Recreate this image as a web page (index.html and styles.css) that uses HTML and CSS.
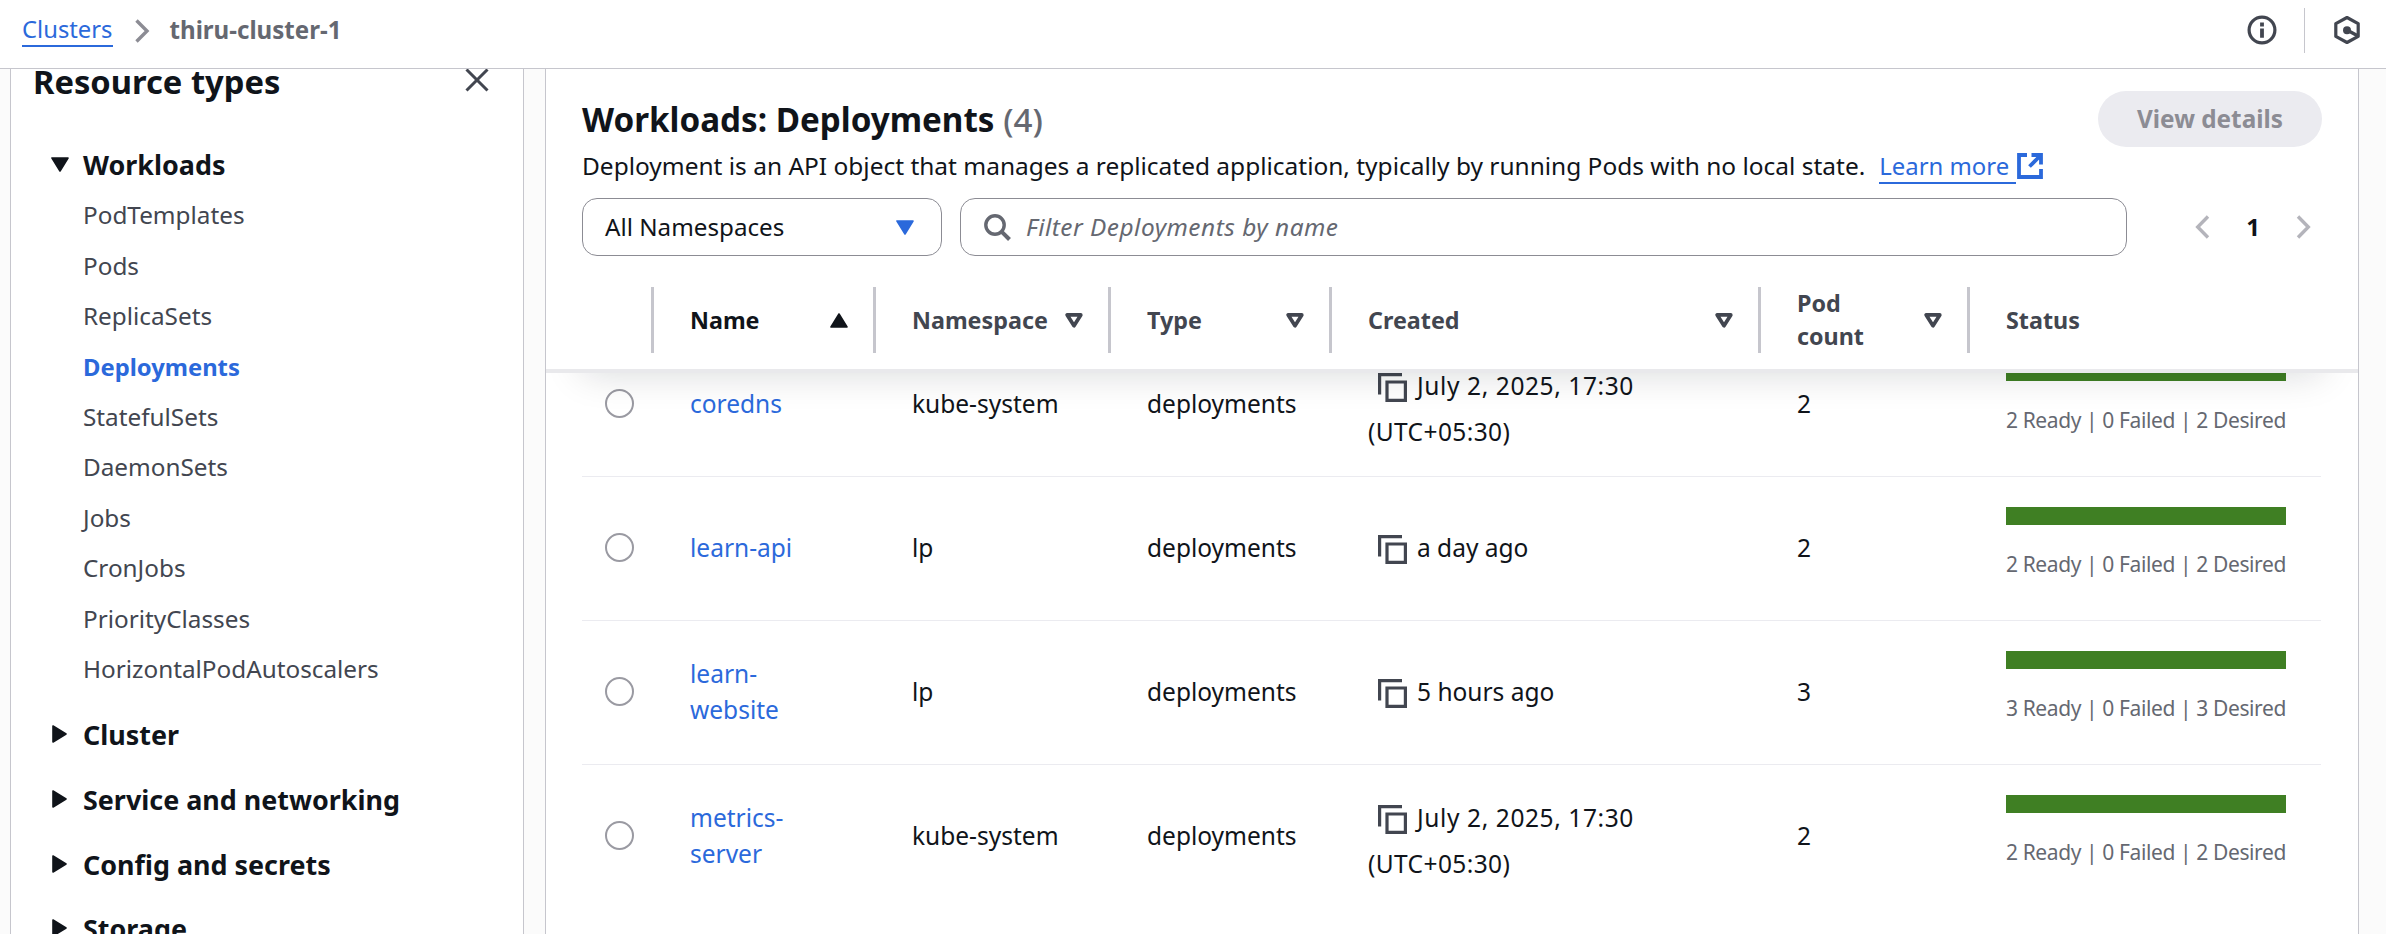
FILE: index.html
```
<!DOCTYPE html>
<html lang="en">
<head>
<meta charset="utf-8">
<title>thiru-cluster-1</title>
<link rel="stylesheet" href="styles.css">
</head>
<body>
<svg class="defs" width="0" height="0">
  <symbol id="copy" viewBox="0 0 29 29"><path d="M1.6 21.5V1.6H24M9 9h18.4v18.4H9z" fill="none" stroke="currentColor" stroke-width="3.2"/></symbol>
  <symbol id="sort" viewBox="0 0 18 15"><path d="M2.2 1.9h13.6L9 12.8z" fill="none" stroke="currentColor" stroke-width="3.7" stroke-linejoin="round"/></symbol>
  <symbol id="down" viewBox="0 0 18 15"><path d="M1 1h16L9 14z" fill="currentColor" stroke="currentColor" stroke-width="1.6" stroke-linejoin="round"/></symbol>
  <symbol id="up" viewBox="0 0 18 15"><path d="M1 14h16L9 1z" fill="currentColor" stroke="currentColor" stroke-width="1.6" stroke-linejoin="round"/></symbol>
  <symbol id="right" viewBox="0 0 15 18"><path d="M1 1v16l13-8z" fill="currentColor" stroke="currentColor" stroke-width="1.6" stroke-linejoin="round"/></symbol>
</svg>

<header class="topbar">
  <nav class="crumbs">
    <a class="crumb-link" href="#">Clusters</a>
    <svg class="crumb-sep" width="16" height="24" viewBox="0 0 16 24"><path d="M2.5 1.5 13 12 2.5 22.5" fill="none" stroke="currentColor" stroke-width="3.4"/></svg>
    <span class="crumb-current">thiru-cluster-1</span>
  </nav>
  <div class="tools">
    <svg width="30" height="30" viewBox="0 0 30 30"><circle cx="15" cy="15" r="12.9" fill="none" stroke="currentColor" stroke-width="3.2"/><path d="M15 7.5v4M15 13.4v9.3" stroke="currentColor" stroke-width="3.8"/></svg>
    <i class="tool-divider"></i>
    <svg width="26" height="30" viewBox="0 0 26 30"><path d="M13 2.5 24.2 8.6v12.8L13 27.5 1.8 21.4V8.6z" fill="none" stroke="currentColor" stroke-width="3.2" stroke-linejoin="round"/><circle cx="13" cy="15.2" r="4" fill="currentColor"/><path d="M13 15 24 21" stroke="currentColor" stroke-width="3.4"/></svg>
  </div>
</header>

<div class="layout">
  <aside class="sidebar">
    <div class="side-head">
      <h2 class="side-title">Resource types</h2>
      <svg width="24" height="24" viewBox="0 0 24 24"><path d="M1.5 1.5l21 21M22.5 1.5l-21 21" stroke="currentColor" stroke-width="3"/></svg>
    </div>
    <div class="group open"><svg class="caret" width="18" height="15"><use href="#down"/></svg>Workloads</div>
    <ul class="links">
      <li>PodTemplates</li>
      <li>Pods</li>
      <li>ReplicaSets</li>
      <li class="active">Deployments</li>
      <li>StatefulSets</li>
      <li>DaemonSets</li>
      <li>Jobs</li>
      <li>CronJobs</li>
      <li>PriorityClasses</li>
      <li>HorizontalPodAutoscalers</li>
    </ul>
    <div class="group"><svg class="caret side" width="15" height="18"><use href="#right"/></svg>Cluster</div>
    <div class="group"><svg class="caret side" width="15" height="18"><use href="#right"/></svg>Service and networking</div>
    <div class="group"><svg class="caret side" width="15" height="18"><use href="#right"/></svg>Config and secrets</div>
    <div class="group"><svg class="caret side" width="15" height="18"><use href="#right"/></svg>Storage</div>
  </aside>

  <main class="panel">
    <div class="panel-head">
      <div class="title-row">
        <h1 class="title">Workloads: Deployments <span class="count">(4)</span></h1>
        <button class="details" disabled>View details</button>
      </div>
      <p class="desc"><span>Deployment is an API object that manages a replicated application, typically by running Pods with no local state.</span>
        <a class="learn" href="#">Learn more</a>
        <svg class="ext" width="26" height="26" viewBox="0 0 26 26"><path d="M10 2H2v22h22v-8M14.5 2H24v9.5M24 2 12.5 13.5" fill="none" stroke="currentColor" stroke-width="3.8"/></svg>
      </p>
      <div class="filters">
        <div class="select"><span>All Namespaces</span><svg width="18" height="15"><use href="#down"/></svg></div>
        <div class="search">
          <svg width="27" height="27" viewBox="0 0 27 27"><circle cx="11" cy="11" r="9.2" fill="none" stroke="currentColor" stroke-width="3.4"/><path d="M17.3 17.3 25.5 25.5" stroke="currentColor" stroke-width="4"/></svg>
          <span>Filter Deployments by name</span>
        </div>
        <div class="pager">
          <svg width="15" height="24" viewBox="0 0 15 24"><path d="M13 1.5 2.7 12 13 22.5" fill="none" stroke="currentColor" stroke-width="3.4"/></svg>
          <b>1</b>
          <svg width="15" height="24" viewBox="0 0 15 24"><path d="M2 1.5 12.3 12 2 22.5" fill="none" stroke="currentColor" stroke-width="3.4"/></svg>
        </div>
      </div>
      <div class="grid thead">
        <div class="th"></div>
        <div class="th sorted"><span>Name</span><svg width="18" height="15"><use href="#up"/></svg></div>
        <div class="th"><span>Namespace</span><svg width="18" height="15"><use href="#sort"/></svg></div>
        <div class="th"><span>Type</span><svg width="18" height="15"><use href="#sort"/></svg></div>
        <div class="th"><span>Created</span><svg width="18" height="15"><use href="#sort"/></svg></div>
        <div class="th"><span>Pod<br>count</span><svg width="18" height="15"><use href="#sort"/></svg></div>
        <div class="th last"><span>Status</span></div>
      </div>
    </div>

    <div class="rows">
      <div class="grid row">
        <div class="pick"><i class="radio"></i></div>
        <div class="td name">coredns</div>
        <div class="td">kube-system</div>
        <div class="td">deployments</div>
        <div class="td date"><div class="stamp"><svg class="copy" width="29" height="29"><use href="#copy"/></svg><span>July 2, 2025, 17:30</span></div><div class="zone">(UTC+05:30)</div></div>
        <div class="td">2</div>
        <div class="td status"><i class="bar"></i><span>2 Ready | 0 Failed | 2 Desired</span></div>
      </div>
      <div class="grid row">
        <div class="pick"><i class="radio"></i></div>
        <div class="td name">learn-api</div>
        <div class="td">lp</div>
        <div class="td">deployments</div>
        <div class="td"><div class="stamp ago"><svg class="copy" width="29" height="29"><use href="#copy"/></svg><span>a day ago</span></div></div>
        <div class="td">2</div>
        <div class="td status"><i class="bar"></i><span>2 Ready | 0 Failed | 2 Desired</span></div>
      </div>
      <div class="grid row">
        <div class="pick"><i class="radio"></i></div>
        <div class="td name">learn-<br>website</div>
        <div class="td">lp</div>
        <div class="td">deployments</div>
        <div class="td"><div class="stamp ago"><svg class="copy" width="29" height="29"><use href="#copy"/></svg><span>5 hours ago</span></div></div>
        <div class="td">3</div>
        <div class="td status"><i class="bar"></i><span>3 Ready | 0 Failed | 3 Desired</span></div>
      </div>
      <div class="grid row">
        <div class="pick"><i class="radio"></i></div>
        <div class="td name">metrics-<br>server</div>
        <div class="td">kube-system</div>
        <div class="td">deployments</div>
        <div class="td date"><div class="stamp"><svg class="copy" width="29" height="29"><use href="#copy"/></svg><span>July 2, 2025, 17:30</span></div><div class="zone">(UTC+05:30)</div></div>
        <div class="td">2</div>
        <div class="td status"><i class="bar"></i><span>2 Ready | 0 Failed | 2 Desired</span></div>
      </div>
    </div>
  </main>
</div>
</body>
</html>
```
FILE: styles.css
```
* { box-sizing: border-box; }
body {
  margin: 0;
  height: 934px;
  overflow: hidden;
  display: flex;
  flex-direction: column;
  background: #fbfbfb;
  color: #10141a;
  font: 24.5px/36px "Noto Sans", "Open Sans", sans-serif;
}
svg { display: block; flex: none; }
.defs { position: absolute; }

.topbar {
  flex: none;
  height: 69px;
  padding: 0 26px 0 22px;
  display: flex;
  justify-content: space-between;
  background: #fff;
  border-bottom: 1px solid #c6c6cd;
}
.crumbs { display: flex; align-items: flex-start; padding-top: 12px; }
.crumb-link {
  color: #2b69db;
  font-size: 23.8px;
  line-height: 33px;
  height: 35px;
  padding-top: 1px;
  border-bottom: 2px solid #2b69db;
  text-decoration: none;
}
.crumb-sep { color: #8c8c94; margin: 7px 20px 0 21px; }
.crumb-current { color: #656871; font-weight: 700; font-size: 24.1px; line-height: 36px; }
.tools { display: flex; align-items: flex-start; color: #424650; padding-top: 15px; }
.tool-divider { width: 1px; height: 45px; background: #c6c6cd; margin: -7px 29px 0 27px; }

.layout { flex: 1; min-height: 0; display: flex; gap: 21px; padding: 0 27px 0 10px; }
.sidebar {
  width: 514px;
  background: #fff;
  border: 1px solid #c6c6cd;
  border-width: 0 1px;
  overflow: hidden;
}
.side-head {
  display: flex;
  justify-content: space-between;
  height: 71px;
  padding: 0 34px 0 22px;
  color: #424650;
}
.side-title { margin: -8px 0 0; color: #10141a; font-size: 32.7px; line-height: 42px; font-weight: 700; }
.side-head svg { margin-top: -1px; }
.group {
  display: flex;
  align-items: center;
  gap: 14px;
  padding-left: 40px;
  height: 64.8px;
  font-size: 26.9px;
  font-weight: 700;
}
.group.open { height: 50.3px; }
.caret.side { margin: 0 2px 0 1px; }
.group .caret { margin-top: -2px; }
.links { list-style: none; margin: 0 0 8px; padding: 0 0 0 72px; color: #424650; font-size: 24.3px; }
.links li { height: 50.45px; line-height: 50.45px; }
.links .active { color: #2b69db; font-weight: 700; font-size: 23.8px; }

.panel { flex: 1; background: #fff; border: 1px solid #c6c6cd; border-width: 0 1px; overflow: hidden; }
.panel-head {
  position: relative;
  z-index: 1;
  height: 304px;
  padding: 22px 36px 0 36px;
  background: #fff;
  border-bottom: 4px solid #e9e9ec;
  box-shadow: 0 36px 36px -36px rgba(15, 20, 26, 0.16);
}
.title-row { display: flex; justify-content: space-between; height: 57px; }
.title { margin: 0; font-size: 33.2px; line-height: 57px; font-weight: 700; }
.count { font-weight: 500; color: #656871; }
.details {
  width: 224px;
  height: 56px;
  border: 0;
  border-radius: 28px;
  background: #ebebf0;
  color: #8c8c94;
  font: 700 24.3px/54px "Noto Sans", "Open Sans", sans-serif;
}
.desc { display: flex; margin: 0; height: 50px; font-size: 24.47px; line-height: 36px; white-space: nowrap; }
.learn {
  color: #2b69db;
  font-size: 23.9px;
  height: 36px;
  margin-left: 14px;
  padding-right: 7px;
  border-bottom: 2px solid #2b69db;
  text-decoration: none;
}
.ext { color: #2b69db; margin: 5px 0 0 1px; }
.filters { display: flex; height: 58px; }
.select, .search {
  display: flex;
  align-items: center;
  border: 1px solid #8c8c94;
  border-radius: 15px;
}
.select { width: 360px; padding: 0 27px 0 22px; justify-content: space-between; color: #10141a; font-size: 24.2px; }
.select svg { color: #2b69db; }
.search { width: 1167px; margin-left: 18px; padding-left: 23px; gap: 15px; color: #656871; font-style: italic; font-size: 24.4px; letter-spacing: 0.5px; }
.pager { display: flex; align-items: center; color: #b4b4bb; margin-left: 68px; }
.pager b { width: 86px; text-align: center; color: #10141a; font-size: 24px; }

.grid { display: grid; grid-template-columns: 72px 222px 235px 221px 429px 209px 1fr; }
.thead { margin-top: 31px; height: 65px; }
.th {
  display: flex;
  align-items: center;
  justify-content: space-between;
  padding: 0 25px 0 36px;
  border-right: 3px solid #c6c6cd;
  color: #424650;
  font-weight: 700;
  font-size: 23.3px;
  line-height: 33px;
}
.th.sorted { color: #10141a; }
.th.last { border: 0; }

.rows { margin: -40px 37px 0 36px; }
.row { height: 144px; border-bottom: 1px solid #ebebf0; }
.row:last-child { border-color: transparent; }
.pick { padding: 56px 0 0 23px; }
.radio { display: block; width: 29px; height: 29px; border: 2px solid #9a9aa2; border-radius: 50%; }
.td { display: flex; flex-direction: column; justify-content: center; padding: 0 0 1px 36px; }
.name { color: #2b69db; }
.date { padding-top: 10px; line-height: 46px; }
.stamp { display: flex; align-items: center; gap: 10px; padding-left: 10px; letter-spacing: 0.6px; }
.stamp.ago { letter-spacing: 0; }
.copy { color: #424650; margin-top: 2px; }
.zone { letter-spacing: 0.4px; }
.status { justify-content: flex-start; padding: 30px 0 0 36px; color: #656871; font-size: 21px; letter-spacing: -0.39px; }
.bar { width: 280px; height: 18px; background: #3f7f23; margin-bottom: 21px; }
```
